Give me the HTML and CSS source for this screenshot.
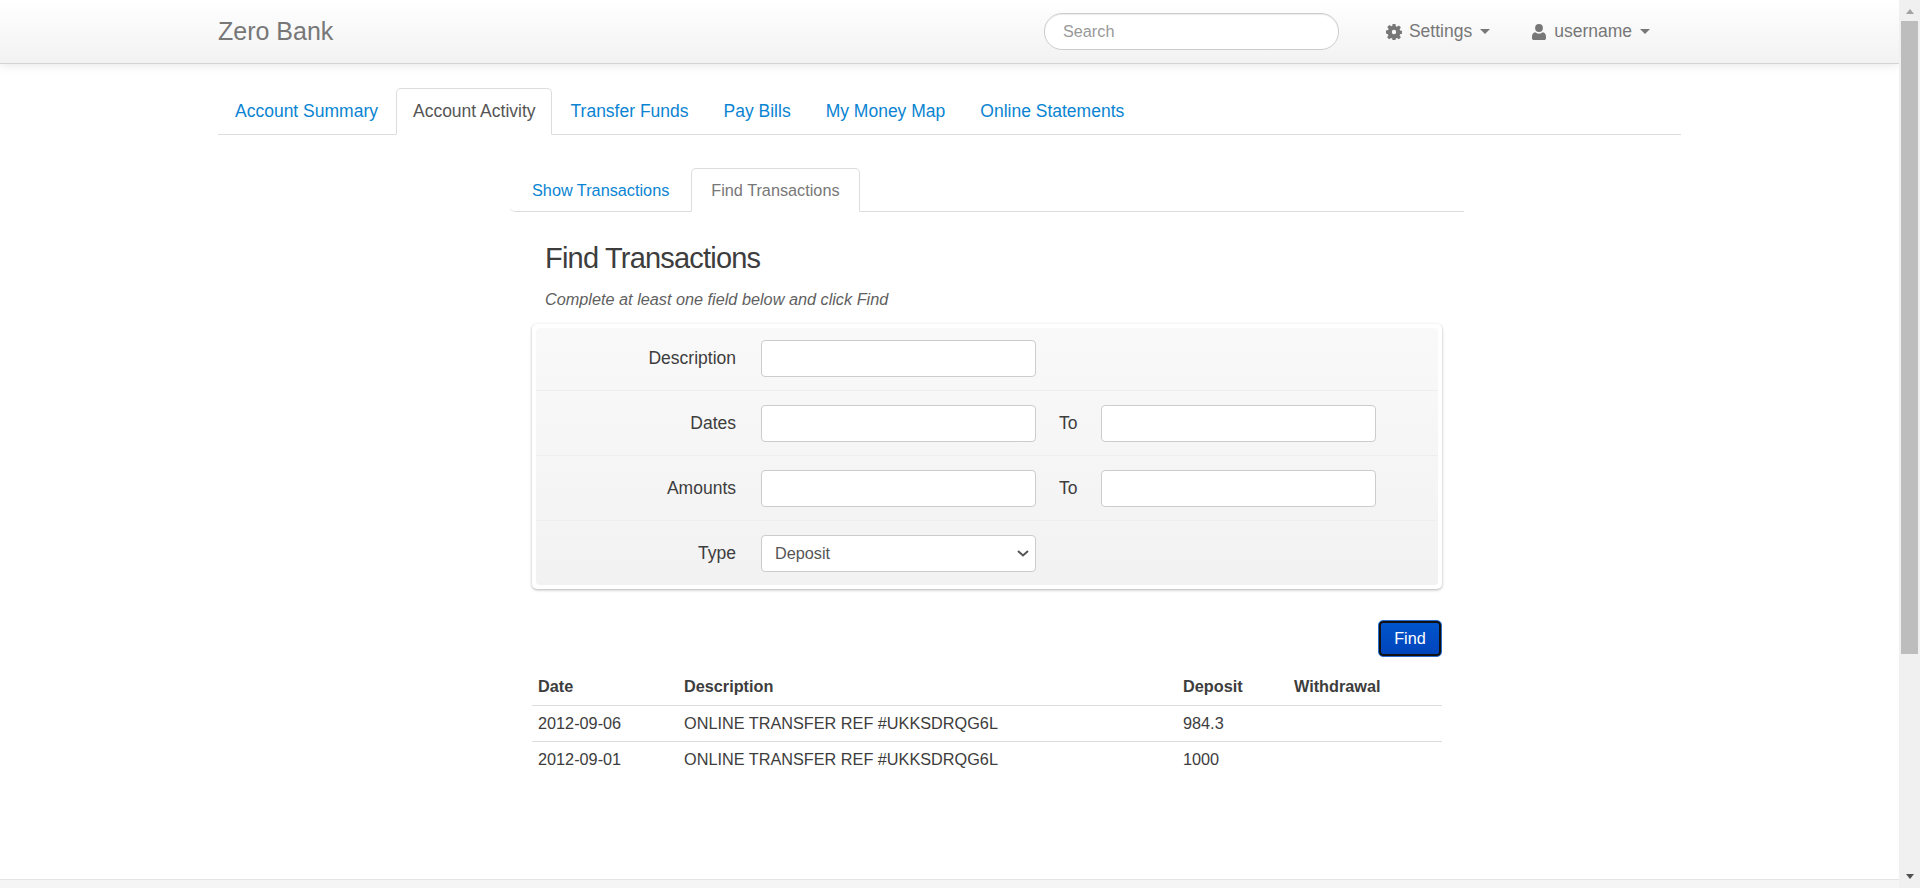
FILE: index.html
```html
<!DOCTYPE html>
<html>
<head>
  <title>Zero Bank - Account Activity</title>
  <link rel="stylesheet" href="styles.css">
</head>
<body>
  <div class="page">
    <div class="navbar">
      <div class="navbar-inner">
        <a class="brand">Zero Bank</a>
        <div class="navbar-right">
          <input class="search" type="text" placeholder="Search">
          <a class="menu-link menu-settings">
            <svg class="menu-icon" viewBox="0 0 16 16"><path d="M6.6 0h2.8l.4 2.2 1.2.5 1.9-1.3 2 2-1.3 1.900.5 1.200 2.200.4v2.900l-2.200.4-.5 1.200 1.300 1.900-2 2-1.900-1.300-1.200.5-.4 2.200H6.600l-.4-2.200-1.200-.5-1.900 1.300-2-2 1.300-1.900-.5-1.200L-.1 9.400V6.500l2.200-.4.5-1.200-1.300-1.900 2-2 1.900 1.300 1.200-.5zM8 5.800a2.200 2.200 0 1 0 0 4.400 2.200 2.200 0 0 0 0-4.400z" fill-rule="evenodd"/></svg>
            Settings <span class="caret"></span>
          </a>
          <a class="menu-link menu-user">
            <svg class="menu-icon" viewBox="0 0 14 16"><circle cx="7" cy="4" r="3.900"/><path d="M3.200 8.300C4.200 9.200 5.500 9.700 7 9.700s2.800-.5 3.800-1.400c2.100.3 3.200 1.900 3.200 4.500v1.400c0 1.100-.8 1.800-1.800 1.800H1.800C.8 16 0 15.300 0 14.200v-1.400c0-2.600 1.100-4.200 3.200-4.500z"/></svg>
            username <span class="caret"></span>
          </a>
        </div>
      </div>
    </div>

    <div class="container">
      <ul class="tabs">
        <li><a>Account Summary</a></li>
        <li class="active"><a>Account Activity</a></li>
        <li><a>Transfer Funds</a></li>
        <li><a>Pay Bills</a></li>
        <li><a>My Money Map</a></li>
        <li><a>Online Statements</a></li>
      </ul>

      <div class="content">
        <ul class="tabs tabs-small">
          <li><a>Show Transactions</a></li>
          <li class="active"><a>Find Transactions</a></li>
        </ul>

        <div class="find">
          <h2>Find Transactions</h2>
          <p class="hint">Complete at least one field below and click Find</p>

          <div class="well">
            <div class="well-inner">
              <div class="row">
                <label>Description</label>
                <input type="text">
              </div>
              <div class="row">
                <label>Dates</label>
                <input type="text">
                <span class="to">To</span>
                <input type="text">
              </div>
              <div class="row">
                <label>Amounts</label>
                <input type="text">
                <span class="to">To</span>
                <input type="text">
              </div>
              <div class="row">
                <label>Type</label>
                <select><option>Deposit</option></select>
              </div>
            </div>
          </div>

          <div class="actions">
            <button class="btn">Find</button>
          </div>

          <table>
            <thead>
              <tr>
                <th class="col-date">Date</th>
                <th class="col-desc">Description</th>
                <th class="col-dep">Deposit</th>
                <th>Withdrawal</th>
              </tr>
            </thead>
            <tbody>
              <tr>
                <td>2012-09-06</td>
                <td>ONLINE TRANSFER REF #UKKSDRQG6L</td>
                <td>984.3</td>
                <td></td>
              </tr>
              <tr>
                <td>2012-09-01</td>
                <td>ONLINE TRANSFER REF #UKKSDRQG6L</td>
                <td>1000</td>
                <td></td>
              </tr>
            </tbody>
          </table>
        </div>
      </div>
    </div>

    <div class="footer"></div>
  </div>

  <div class="scrollbar">
    <span class="arrow-up"></span>
    <div class="thumb"></div>
    <span class="arrow-down"></span>
  </div>
</body>
</html>
```

FILE: styles.css
```css
* {
  box-sizing: border-box;
}

html, body {
  height: 100%;
}

body {
  margin: 0;
  display: flex;
  overflow: hidden;
  font-family: "Liberation Sans", Arial, sans-serif;
  font-size: 16.25px;
  color: #3d3d3d;
  background-color: #fff;
}

.page {
  flex: 1;
  display: flex;
  flex-direction: column;
  min-width: 0;
}

/* Top bar */
.navbar {
  height: 64px;
  flex: none;
  background: linear-gradient(#fff, #f2f2f2);
  border-bottom: 1px solid #d4d4d4;
  box-shadow: 0 1px 10px rgba(0, 0, 0, 0.1);
}

.navbar-inner {
  width: 1464px;
  height: 100%;
  margin-left: 218px;
  display: flex;
  align-items: center;
  justify-content: space-between;
}

.brand {
  font-size: 25px;
  color: #777;
}

.navbar-right {
  display: flex;
  align-items: center;
}

.search {
  width: 295px;
  height: 37px;
  padding: 0 18px;
  border: 1px solid #ccc;
  border-radius: 18px;
  background-color: #fff;
  font-family: inherit;
  font-size: 16.25px;
  box-shadow: inset 0 1px 1px rgba(0, 0, 0, 0.075);
}

.search::placeholder {
  color: #999;
}

.menu-link {
  display: flex;
  align-items: center;
  color: #777;
  font-size: 17.5px;
}

.menu-settings {
  margin-left: 47px;
}

.menu-user {
  margin-left: 41px;
  margin-right: 32px;
}

.menu-icon {
  height: 16px;
  width: 16px;
  margin-right: 7px;
  fill: #777;
}

.caret {
  width: 0;
  height: 0;
  margin-left: 8px;
  border-left: 5px solid transparent;
  border-right: 5px solid transparent;
  border-top: 5px solid #777;
}

/* Tabs */
.container {
  width: 1463px;
  margin-left: 218px;
  flex: 1;
  padding-top: 24px;
}

.tabs {
  display: flex;
  margin: 0;
  padding: 0;
  list-style: none;
  border-bottom: 1px solid #ddd;
}

.tabs li {
  margin-right: 2px;
  margin-bottom: -1px;
}

.tabs a {
  display: block;
  height: 47px;
  padding: 0 15px 0 16px;
  line-height: 45px;
  font-size: 17.5px;
  color: #0a84d2;
  border: 1px solid transparent;
  border-radius: 5px 5px 0 0;
}

.tabs .active a {
  color: #555;
  background-color: #fff;
  border-color: #ddd #ddd transparent;
}

.tabs-small {
  padding-left: 3px;
  border-bottom-left-radius: 5px;
}

.tabs-small a {
  height: 44px;
  padding: 0 19px 0 18px;
  line-height: 42px;
  font-size: 16.25px;
}

.tabs-small .active a {
  padding-left: 19px;
  color: #777;
}

.content {
  width: 954px;
  margin-left: 292px;
  padding-top: 33px;
}

.find {
  width: 910px;
  margin-left: 22px;
}

h2 {
  margin: 28px 0 0 13px;
  font-size: 29px;
  font-weight: normal;
  line-height: 36px;
  letter-spacing: -0.8px;
}

.hint {
  margin: 13px 0 15px 13px;
  font-size: 16.25px;
  line-height: 20px;
  font-style: italic;
  color: #5f5f5f;
}

/* Search form */
.well {
  padding: 4px;
  background-color: #fff;
  border-radius: 5px;
  box-shadow: 0 1px 3px rgba(0, 0, 0, 0.3);
}

.well-inner {
  background: linear-gradient(#f9f9f9, #f2f2f2);
  border-radius: 4px;
}

.row {
  height: 65px;
  display: flex;
  align-items: center;
  border-bottom: 1px solid #eee;
}

.row:first-child {
  height: 63px;
  padding-bottom: 2px;
}

.row:last-child {
  border-bottom: 0;
  height: 64px;
}

.row label {
  width: 200px;
  text-align: right;
  font-size: 17.5px;
  margin-right: 25px;
}

.row input, .row select {
  width: 275px;
  height: 37px;
  border: 1px solid #ccc;
  border-radius: 4px;
  background-color: #fff;
  font-family: inherit;
  font-size: 16.25px;
  color: #555;
}

.row select {
  padding-left: 13px;
  appearance: none;
  background-image: url("data:image/svg+xml,%3Csvg xmlns='http://www.w3.org/2000/svg' width='12' height='7'%3E%3Cpath d='M1 1l5 4.500 5-4.500' fill='none' stroke='%23555' stroke-width='2'/%3E%3C/svg%3E");
  background-repeat: no-repeat;
  background-position: right 6px center;
}

.to {
  width: 65px;
  padding-left: 23px;
  font-size: 17.5px;
}

.actions {
  display: flex;
  justify-content: flex-end;
  margin-top: 31px;
}

.btn {
  width: 64px;
  height: 37px;
  padding: 0;
  color: #fff;
  font-family: inherit;
  font-size: 16.25px;
  background: linear-gradient(#0055cc, #0044bb);
  border: 1px solid #2a6fd0;
  border-radius: 5px;
  box-shadow: inset 0 0 0 2px #111;
}

/* Results */
table {
  width: 100%;
  margin-top: 12px;
  border-collapse: collapse;
  font-size: 16.25px;
  table-layout: fixed;
}

th, td {
  height: 36px;
  padding: 0 6px;
  text-align: left;
}

th {
  font-weight: bold;
}

td {
  border-top: 1px solid #ddd;
}

.col-date {
  width: 146px;
}

.col-desc {
  width: 499px;
}

.col-dep {
  width: 111px;
}

.footer {
  height: 9px;
  flex: none;
  background-color: #f5f5f5;
  border-top: 1px solid #e5e5e5;
}

/* Window scrollbar */
.scrollbar {
  width: 21px;
  flex: none;
  display: flex;
  flex-direction: column;
  align-items: center;
  padding-top: 9px;
  background-color: #f0f0f0;
}

.arrow-up {
  border-left: 4px solid transparent;
  border-right: 4px solid transparent;
  border-bottom: 5px solid #a3a3a3;
}

.thumb {
  width: 17px;
  height: 633px;
  margin-top: 7px;
  background-color: #bdbdbd;
}

.arrow-down {
  margin-top: auto;
  margin-bottom: 9px;
  border-left: 4px solid transparent;
  border-right: 4px solid transparent;
  border-top: 5px solid #505050;
}
```
